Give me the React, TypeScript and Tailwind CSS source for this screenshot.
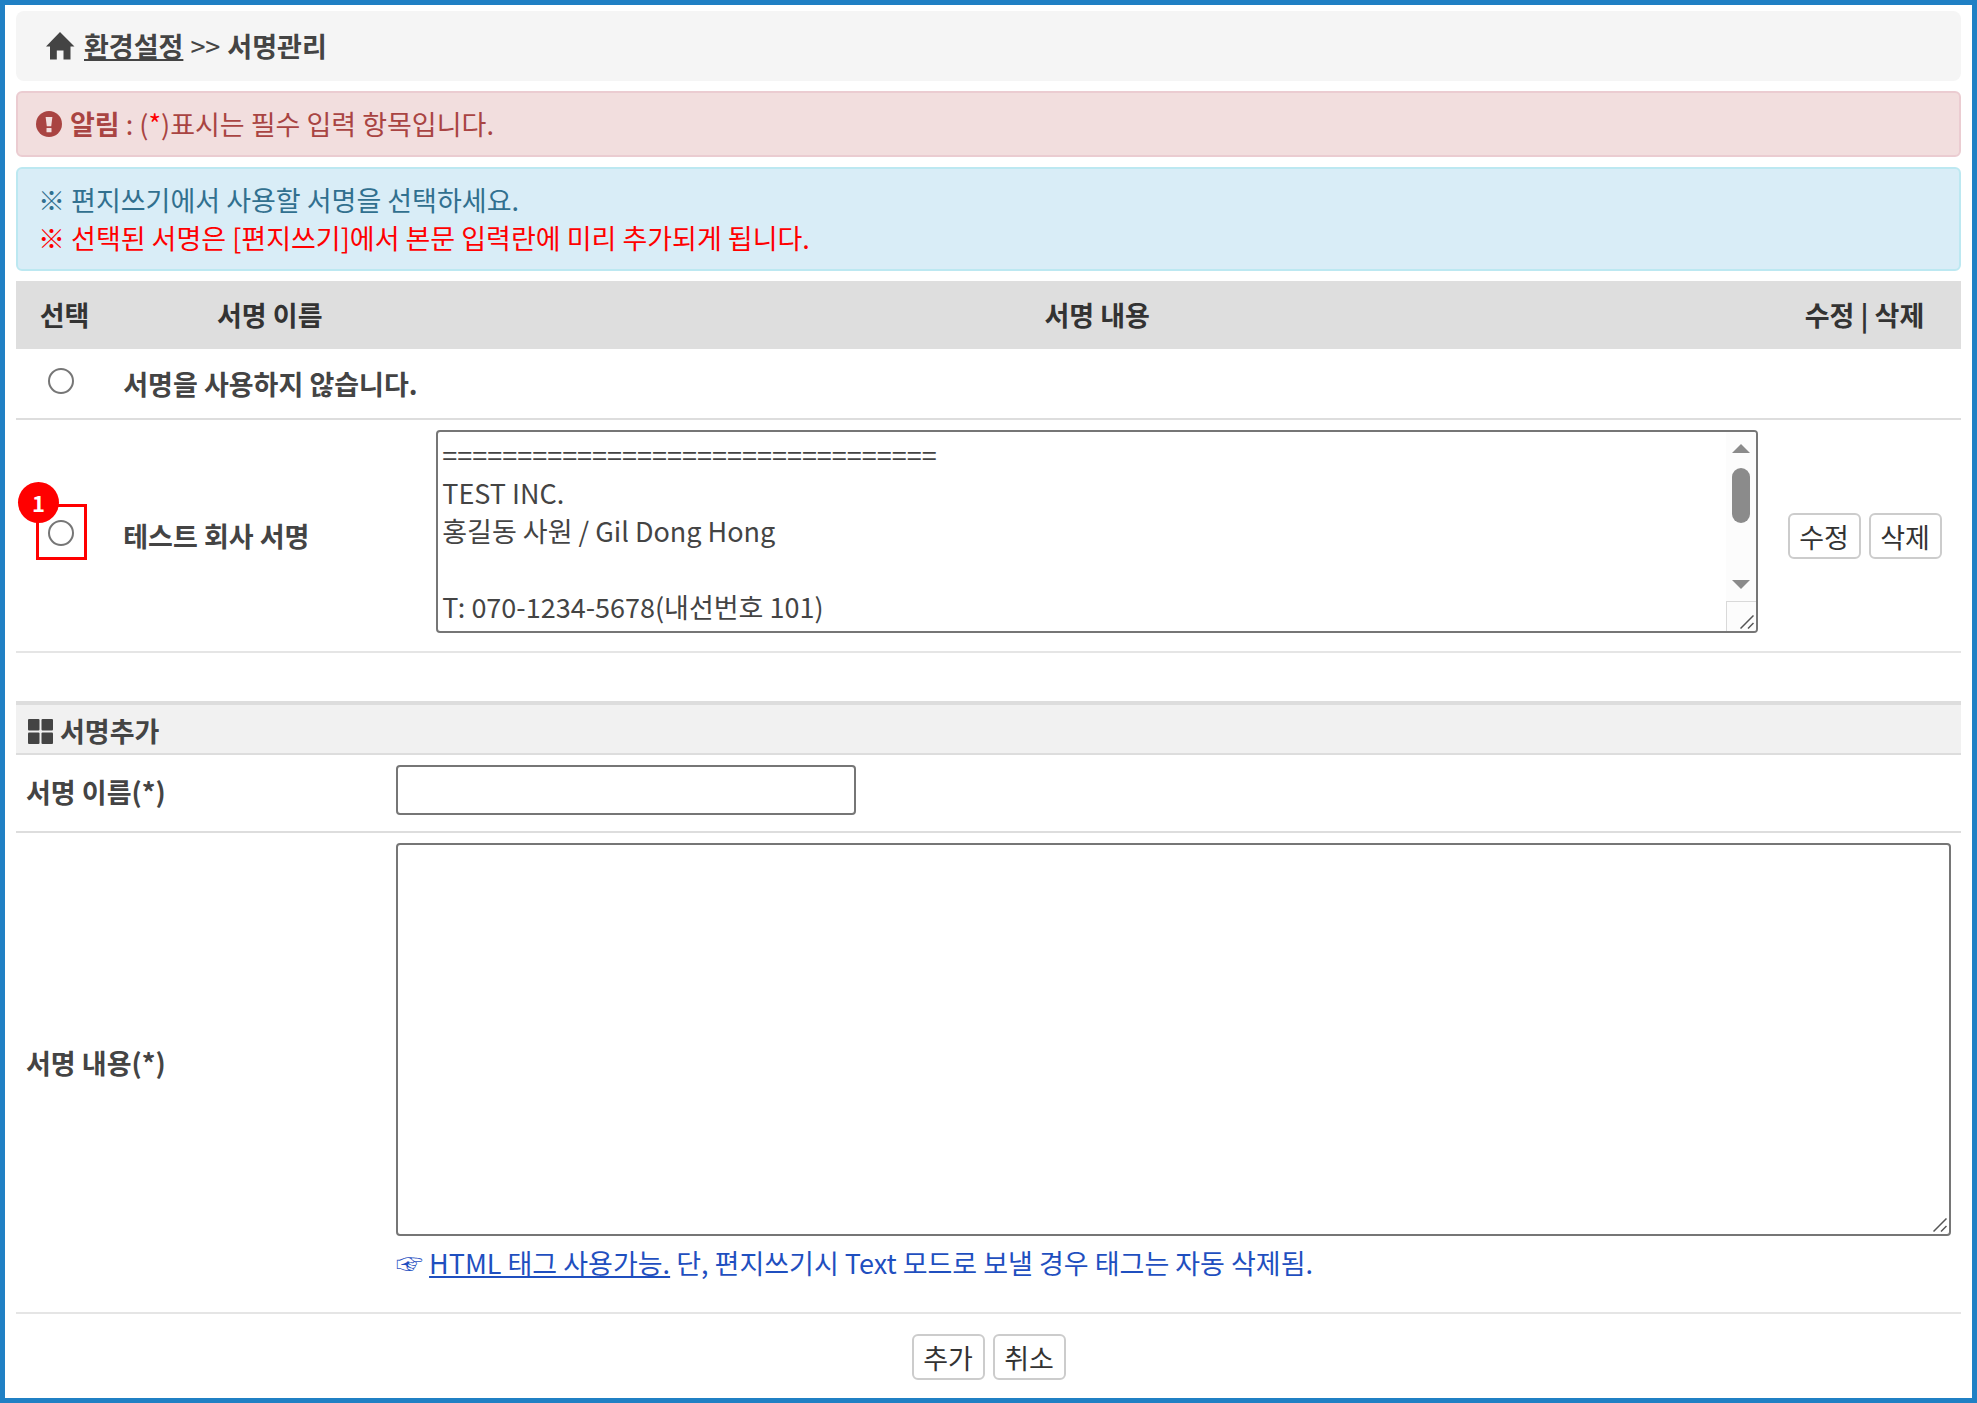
import React, { useState } from 'react';

const SIGNATURE = `=================================
TEST INC.
홍길동 사원 / Gil Dong Hong

T: 070-1234-5678(내선번호 101)
F: 070-1234-5679
E: test@test.com`;

const buttonClass =
  'h-[46px] w-[73px] rounded-md border-2 border-[#ccc] bg-white pt-0.5 text-center leading-[38px] text-[#333]';

const radioClass =
  'mr-[7px] mb-1.5 size-[26px] appearance-none rounded-full border-2 border-[#767676] bg-white checked:border-8 checked:border-[#0075ff]';

const fieldClass =
  'block rounded-sm border-2 border-[#767676] bg-white px-1 outline-none';

const HomeIcon = () => (
  <svg viewBox="0 0 29 28" className="h-[28px] w-[29px] shrink-0" fill="#444" aria-hidden="true">
    <path d="M14 0 L28.500 14.500 H24.500 V27.500 H17.500 V18.500 H10.800 V27.500 H4 V14.500 H0 Z" />
  </svg>
);

const AlertIcon = () => (
  <svg viewBox="0 0 26 26" className="size-[26px] shrink-0" aria-hidden="true">
    <circle cx="13" cy="13" r="13" fill="#a94442" />
    <path d="M9.600 6 H16.400 L15.200 15.200 H10.800 Z" fill="#f2dede" />
    <rect x="10.500" y="17" width="5" height="4.200" rx="0.500" fill="#f2dede" />
  </svg>
);

const GridIcon = () => (
  <svg viewBox="0 0 25 25" className="size-[25px] shrink-0" fill="#444" aria-hidden="true">
    <rect width="11.500" height="11.500" rx="1" />
    <rect x="13.500" width="11.500" height="11.500" rx="1" />
    <rect y="13.500" width="11.500" height="11.500" rx="1" />
    <rect x="13.500" y="13.500" width="11.500" height="11.500" rx="1" />
  </svg>
);

const Grip = () => (
  <svg viewBox="0 0 14 14" className="size-[14px]" stroke="#555" strokeWidth="1.500" fill="none" aria-hidden="true">
    <path d="M0.500 13.500 L13.500 0.500 M8 13.500 L13.500 8" />
  </svg>
);

const ScrollBar = () => (
  <div className="flex w-[30px] shrink-0 flex-col bg-[#fcfcfc]" aria-hidden="true">
    <div className="flex grow flex-col items-center pt-3 pb-3">
      <svg viewBox="0 0 18 9" className="h-[9px] w-[18px]" fill="#8b8b8b">
        <path d="M9 0 L18 9 H0 Z" />
      </svg>
      <div className="mt-[15px] h-[55px] w-[18px] rounded-full bg-[#8b8b8b]" />
      <svg viewBox="0 0 18 9" className="mt-auto h-[9px] w-[18px]" fill="#8b8b8b">
        <path d="M0 0 H18 L9 9 Z" />
      </svg>
    </div>
    <div className="flex h-[30px] items-end justify-end border-t border-l border-[#d9d9d9] p-0.5">
      <Grip />
    </div>
  </div>
);

export default function App() {
  const [selected, setSelected] = useState('');
  const [signature, setSignature] = useState(SIGNATURE);
  const [name, setName] = useState('');
  const [content, setContent] = useState('');

  return (
    <div className="min-h-screen border-5 border-[#2080c4] bg-white px-[11px] pt-1.5 pb-[18px] font-['Noto_Sans_CJK_KR',sans-serif] text-[27px] leading-[38px] text-[#444]">
      <nav className="flex h-[70px] items-center rounded-lg bg-[#f5f5f5] pl-[30px]">
        <HomeIcon />
        <a href="#settings" className="ml-[9px] font-bold underline">
          환경설정
        </a>
        <span className="mx-[7px]">&gt;&gt;</span>
        <strong>서명관리</strong>
      </nav>

      <div className="mt-2.5 flex h-[66px] items-center rounded-md border-2 border-[#ebccd1] bg-[#f2dede] pl-[18px] text-[#a94442]">
        <AlertIcon />
        <p className="ml-2">
          <strong>알림</strong> : (<span className="text-[#f00]">*</span>)표시는 필수 입력 항목입니다.
        </p>
      </div>

      <div className="mt-2.5 rounded-md border-2 border-[#bce8f1] bg-[#d9edf7] px-5 py-3 text-[#31708f]">
        <p>※ 편지쓰기에서 사용할 서명을 선택하세요.</p>
        <p className="text-[#f00]">※ 선택된 서명은 [편지쓰기]에서 본문 입력란에 미리 추가되게 됩니다.</p>
      </div>

      <table className="mt-2.5 w-full table-fixed border-collapse">
        <colgroup>
          <col className="w-[5%]" />
          <col className="w-[313px]" />
          <col />
          <col className="w-[193px]" />
        </colgroup>
        <thead>
          <tr className="h-[68px] bg-[#dedede] text-[#333]">
            <th>선택</th>
            <th>서명 이름</th>
            <th>서명 내용</th>
            <th>수정 | 삭제</th>
          </tr>
        </thead>
        <tbody>
          <tr className="h-[70px] border-b-2 border-[#ddd]">
            <td>
              <div className="flex justify-center">
                <input
                  id="sign-none"
                  type="radio"
                  name="sign"
                  checked={selected === 'none'}
                  onChange={() => setSelected('none')}
                  className={radioClass}
                />
              </div>
            </td>
            <td colSpan={3} className="pl-2.5 font-bold">
              <label htmlFor="sign-none">서명을 사용하지 않습니다.</label>
            </td>
          </tr>
          <tr className="h-[233px] border-b-2 border-[#e5e5e5]">
            <td>
              <div className="relative flex justify-center">
                <input
                  id="sign-test"
                  type="radio"
                  name="sign"
                  checked={selected === 'test'}
                  onChange={() => setSelected('test')}
                  className={radioClass}
                />
                <span className="pointer-events-none absolute -top-4 left-5 h-[56px] w-[51px] border-3 border-[#f00]" />
                <span className="pointer-events-none absolute -top-[38px] left-0.5 size-[41px] rounded-full bg-[#f00] text-center text-[22px] leading-[41px] font-bold text-white">
                  1
                </span>
              </div>
            </td>
            <td className="pl-2.5 font-bold">
              <label htmlFor="sign-test">테스트 회사 서명</label>
            </td>
            <td className="px-2.5 pt-2.5 pb-[18px]">
              <div className="flex h-[203px] overflow-hidden rounded-sm border-2 border-[#767676] bg-white">
                <textarea
                  aria-label="서명 내용"
                  value={signature}
                  onChange={e => setSignature(e.target.value)}
                  className="min-w-0 grow resize-none px-1 pt-1 outline-none [scrollbar-width:none]"
                />
                <ScrollBar />
              </div>
            </td>
            <td>
              <div className="flex justify-center gap-2">
                <button type="button" className={buttonClass}>
                  수정
                </button>
                <button type="button" className={buttonClass}>
                  삭제
                </button>
              </div>
            </td>
          </tr>
        </tbody>
      </table>

      <form className="mt-12" onSubmit={e => e.preventDefault()}>
        <h2 className="flex h-[54px] items-center border-t-4 border-b-2 border-[#ddd] bg-[#f1f1f1] pt-1 pl-3 font-bold">
          <GridIcon />
          <span className="ml-[7px]">서명추가</span>
        </h2>
        <div className="flex items-center border-b-2 border-[#ddd] pt-2.5 pb-4">
          <label htmlFor="sign-name" className="w-[380px] shrink-0 pt-1 pl-2.5 font-bold">
            서명 이름(*)
          </label>
          <input
            id="sign-name"
            type="text"
            value={name}
            onChange={e => setName(e.target.value)}
            className={`${fieldClass} h-[50px] w-[460px]`}
          />
        </div>
        <div className="flex items-center border-b-2 border-[#e5e5e5] pt-2.5 pr-2.5 pb-[30px]">
          <label htmlFor="sign-content" className="w-[380px] shrink-0 pl-2.5 font-bold">
            서명 내용(*)
          </label>
          <div className="grow">
            <div className="relative">
              <textarea
                id="sign-content"
                value={content}
                onChange={e => setContent(e.target.value)}
                className={`${fieldClass} h-[393px] w-full resize-none`}
              />
              <div className="pointer-events-none absolute right-1 bottom-1">
                <Grip />
              </div>
            </div>
            <p className="mt-2 text-[#1f4fbf]">
              ☞ <u>HTML 태그 사용가능.</u> 단, 편지쓰기시 Text 모드로 보낼 경우 태그는 자동 삭제됨.
            </p>
          </div>
        </div>
        <div className="mt-5 flex justify-center gap-2">
          <button type="submit" className={buttonClass}>
            추가
          </button>
          <button type="reset" className={buttonClass}>
            취소
          </button>
        </div>
      </form>
    </div>
  );
}
